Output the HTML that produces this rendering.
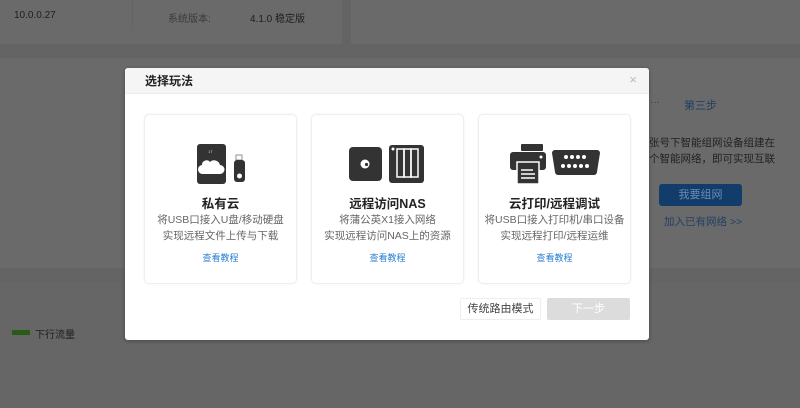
<!DOCTYPE html>
<html><head><meta charset="utf-8"><style>
*{margin:0;padding:0;box-sizing:border-box}
html,body{width:800px;height:408px;overflow:hidden;background:#646464}
body{font-family:"Liberation Sans","Noto Sans CJK SC",sans-serif;position:relative}
.abs{position:absolute}
.pn{background:#6a6a6a}
.modal{left:125px;top:68px;width:524px;height:272px;background:#fff;border-radius:3px;box-shadow:0 1px 4px rgba(0,0,0,.3)}
.hd{height:26px;background:#f5f5f5;border-bottom:1px solid #ececec;font-size:12px;font-weight:bold;color:#222;line-height:26px;padding-left:20px;border-radius:3px 3px 0 0}
.card{top:46px;width:153px;height:170px;border:1px solid #eee;border-radius:5px;text-align:center;box-shadow:0 0 2px rgba(0,0,0,.06)}
.t{position:absolute;top:78px;left:0;right:0;font-size:12.5px;font-weight:bold;color:#222}
.d{position:absolute;top:97px;left:0;right:0;font-size:10.5px;color:#666;line-height:16px}
.l{position:absolute;top:136px;left:0;right:0;font-size:9px;color:#2a7fd4}
.ic{position:absolute;top:0;left:0}
</style></head><body>
<div class="abs pn" style="left:0;top:0;width:342px;height:44px"></div>
<div class="abs pn" style="left:351px;top:0;width:449px;height:44px"></div>
<div class="abs" style="left:132px;top:0;width:1px;height:30px;background:#646464"></div>
<div class="abs" style="left:14px;top:10px;font-size:10px;color:#1e1e1e">10.0.0.27</div>
<div class="abs" style="left:168px;top:10px;font-size:10px;color:#3a3a3a">系统版本:</div>
<div class="abs" style="left:250px;top:10px;font-size:10px;color:#1e1e1e">4.1.0 稳定版</div>
<div class="abs pn" style="left:0;top:58px;width:800px;height:210px"></div>
<div class="abs" style="left:650px;top:97px;font-size:10px;color:#3a3a3a">···</div>
<div class="abs" style="left:684px;top:97px;font-size:11px;color:#1f3f63">第三步</div>
<div class="abs" style="left:649px;top:135px;font-size:10.5px;color:#222;line-height:16px">张号下智能组网设备组建在<br>个智能网络，即可实现互联</div>
<div class="abs" style="left:659px;top:184px;width:83px;height:22px;background:#123d6b;border-radius:3px;color:#6a8cb4;font-size:11px;text-align:center;line-height:22px">我要组网</div>
<div class="abs" style="left:664px;top:214px;font-size:10.5px;color:#213f63">加入已有网络 &gt;&gt;</div>
<div class="abs" style="left:0;top:282px;width:800px;height:126px;background:#666"></div>
<div class="abs" style="left:12px;top:330px;width:18px;height:5px;background:#2b5a14"></div>
<div class="abs" style="left:35px;top:326px;font-size:10px;color:#1e1e1e">下行流量</div>

<div class="abs modal">
<div class="hd">选择玩法</div>
<div class="abs" style="right:12px;top:4px;font-size:13px;color:#bbb">×</div>

<div class="abs card" style="left:19px">
<svg class="ic" width="153" height="80"><rect x="52" y="29" width="29" height="40" rx="3" fill="#333"/><text x="63" y="38" font-size="4" fill="#ccc">1T</text><path d="M58 59 h17 a4.5 4.5 0 0 0 0-9 a6 6 0 0 0-10-3 a4.5 4.5 0 0 0-8 3 a4 4 0 0 0 1 9z" fill="#fff"/><rect x="91" y="40" width="6" height="5" fill="none" stroke="#777" stroke-width=".8"/><rect x="89" y="45" width="11" height="22" rx="3" fill="#333"/><circle cx="94.5" cy="61" r="2.5" fill="#fff"/></svg>
<div class="t">私有云</div><div class="d">将USB口接入U盘/移动硬盘<br>实现远程文件上传与下载</div><div class="l">查看教程</div></div>

<div class="abs card" style="left:186px">
<svg class="ic" width="153" height="80"><rect x="37" y="32" width="33" height="34" rx="4" fill="#333"/><circle cx="53" cy="49" r="4.5" fill="#fff"/><circle cx="54.5" cy="49.5" r="1.6" fill="#333"/><rect x="77" y="30" width="35" height="38" rx="3" fill="#333"/><circle cx="81" cy="34" r="1.5" fill="#fff"/><g fill="none" stroke="#fff" stroke-width="1.5"><rect x="85" y="34" width="7" height="28"/><rect x="92" y="34" width="7" height="28"/><rect x="99" y="34" width="7" height="28"/></g></svg>
<div class="t">远程访问NAS</div><div class="d">将蒲公英X1接入网络<br>实现远程访问NAS上的资源</div><div class="l">查看教程</div></div>

<div class="abs card" style="left:353px">
<svg class="ic" width="153" height="80"><rect x="42" y="29" width="22" height="7" rx="1" fill="#333"/><rect x="31" y="37" width="36" height="18" rx="3" fill="#333"/><circle cx="62" cy="42" r="1.5" fill="#fff"/><rect x="38" y="47" width="22" height="22" fill="#333" stroke="#fff" stroke-width="1.5"/><g stroke="#fff" stroke-width="1.5"><path d="M42 55h12M42 59h14M42 63h14"/></g><path d="M76 35 h42 a3 3 0 0 1 3 3 l-3 19 a3 3 0 0 1-3 3 h-36 a3 3 0 0 1-3-3 l-3-19 a3 3 0 0 1 3-3z" fill="#333"/><g fill="#fff"><circle cx="87" cy="42" r="2"/><circle cx="93" cy="42" r="2"/><circle cx="99" cy="42" r="2"/><circle cx="105" cy="42" r="2"/><circle cx="84" cy="51" r="2"/><circle cx="90" cy="51" r="2"/><circle cx="96" cy="51" r="2"/><circle cx="102" cy="51" r="2"/><circle cx="108" cy="51" r="2"/></g></svg>
<div class="t">云打印/远程调试</div><div class="d">将USB口接入打印机/串口设备<br>实现远程打印/远程运维</div><div class="l">查看教程</div></div>

<div class="abs" style="left:335px;top:230px;width:81px;height:22px;border:1px solid #eee;border-radius:2px;font-size:11px;color:#444;text-align:center;line-height:20px">传统路由模式</div>
<div class="abs" style="left:422px;top:230px;width:83px;height:22px;background:#dcdcdc;border-radius:2px;font-size:11px;color:#fff;text-align:center;line-height:22px">下一步</div>
</div>
</body></html>
